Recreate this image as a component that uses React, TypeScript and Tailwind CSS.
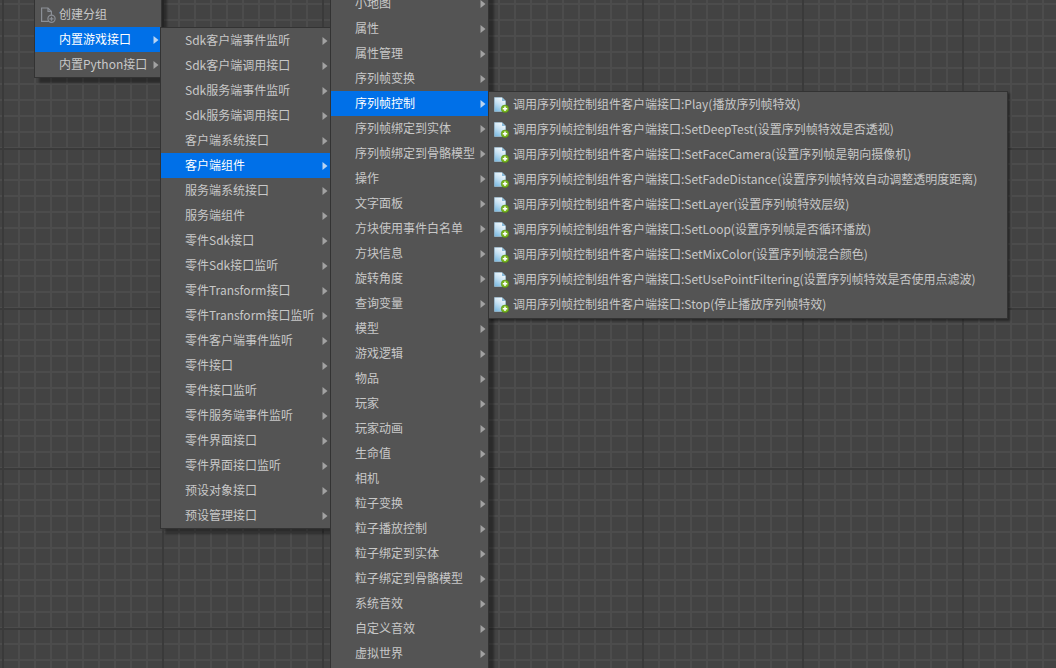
const groupMenu = ['Sdk客户端事件监听', 'Sdk客户端调用接口', 'Sdk服务端事件监听', 'Sdk服务端调用接口', '客户端系统接口', '客户端组件', '服务端系统接口', '服务端组件', '零件Sdk接口', '零件Sdk接口监听', '零件Transform接口', '零件Transform接口监听', '零件客户端事件监听', '零件接口', '零件接口监听', '零件服务端事件监听', '零件界面接口', '零件界面接口监听', '预设对象接口', '预设管理接口']

const componentMenu = ['小地图', '属性', '属性管理', '序列帧变换', '序列帧控制', '序列帧绑定到实体', '序列帧绑定到骨骼模型', '操作', '文字面板', '方块使用事件白名单', '方块信息', '旋转角度', '查询变量', '模型', '游戏逻辑', '物品', '玩家', '玩家动画', '生命值', '相机', '粒子变换', '粒子播放控制', '粒子绑定到实体', '粒子绑定到骨骼模型', '系统音效', '自定义音效', '虚拟世界']

const apiMenu = [
  '调用序列帧控制组件客户端接口:Play(播放序列帧特效)',
  '调用序列帧控制组件客户端接口:SetDeepTest(设置序列帧特效是否透视)',
  '调用序列帧控制组件客户端接口:SetFaceCamera(设置序列帧是朝向摄像机)',
  '调用序列帧控制组件客户端接口:SetFadeDistance(设置序列帧特效自动调整透明度距离)',
  '调用序列帧控制组件客户端接口:SetLayer(设置序列帧特效层级)',
  '调用序列帧控制组件客户端接口:SetLoop(设置序列帧是否循环播放)',
  '调用序列帧控制组件客户端接口:SetMixColor(设置序列帧混合颜色)',
  '调用序列帧控制组件客户端接口:SetUsePointFiltering(设置序列帧特效是否使用点滤波)',
  '调用序列帧控制组件客户端接口:Stop(停止播放序列帧特效)',
]

function Arrow({ active }: { active?: boolean }) {
  return (
    <svg width="6" height="8" viewBox="0 0 6 8" className="shrink-0">
      <path d="M0.5 0 L5.5 4 L0.5 8 Z" fill={active ? '#b9d4f2' : '#a2a2a2'} />
    </svg>
  )
}

function Row({ label, active }: { label: string; active?: boolean }) {
  return (
    <div className={`flex h-[25px] items-center justify-between pl-6 pr-[2px] ${active ? 'bg-[#0070e8] text-white' : 'text-[#c8c8c8]'}`}>
      <span className="whitespace-nowrap pb-[2px]">{label}</span>
      <Arrow active={active} />
    </div>
  )
}

function NewGroupIcon() {
  return (
    <svg width="16" height="16" viewBox="0 0 16 16" fill="none" className="shrink-0" stroke="#8b8f96" strokeWidth="1.2">
      <path d="M1.6 1 H8 L11.4 4.4 V14.4 H1.6 Z" />
      <path d="M8 1 V4.4 H11.4" />
      <circle cx="11.5" cy="11.8" r="3.6" fill="#545454" />
      <path d="M11.5 9.8 V13.8 M9.5 11.8 H13.5" />
    </svg>
  )
}

function ApiIcon({ id }: { id: number }) {
  return (
    <svg width="15" height="16" viewBox="0 0 15 16" className="shrink-0">
      <defs>
        <linearGradient id={`page-${id}`} x1="0.7" y1="0" x2="0.2" y2="1">
          <stop offset="0" stopColor="#f6f9fb" />
          <stop offset="0.5" stopColor="#c4e0f2" />
          <stop offset="1" stopColor="#7dbbe2" />
        </linearGradient>
      </defs>
      <path d="M0.5 0.5 H8 L11.5 4 V14.5 H0.5 Z" fill={`url(#page-${id})`} stroke="#a6cbe2" strokeWidth="0.6" />
      <path d="M8 0.5 V4 H11.5 Z" fill="#86b9d9" />
      <circle cx="11" cy="11.8" r="3.8" fill="#7ab820" stroke="#4d8410" strokeWidth="0.5" />
      <path d="M11 9.6 V14 M8.8 11.8 H13.2" stroke="#fff" strokeWidth="1.5" />
    </svg>
  )
}

export default function App() {
  return (
    <div className="relative h-[668px] w-[1056px] overflow-hidden bg-[#434343] bg-[linear-gradient(#3a3a3a_2px,transparent_2px),linear-gradient(90deg,#3a3a3a_2px,transparent_2px),linear-gradient(#4c4c4c_2px,transparent_2px),linear-gradient(90deg,#4c4c4c_2px,transparent_2px)] bg-[size:160px_160px,160px_160px,16px_16px,16px_16px] bg-[position:0_148px,2px_0,0_3px,2px_0] font-['Noto_Sans_CJK_SC','Noto_Sans',sans-serif] text-[12px]">
      <div className="absolute left-[34px] top-[-24px] w-[128px] border border-[#333] bg-[#545454] shadow-[5px_5px_2px_rgba(0,0,0,0.35)]">
        <div className="h-[25px]" />
        <div className="flex h-[25px] items-center gap-[3px] pl-[5px] text-[#c8c8c8]">
          <NewGroupIcon />
          <span className="pb-[2px]">创建分组</span>
        </div>
        <Row label="内置游戏接口" active />
        <Row label="内置Python接口" />
      </div>

      <div className="absolute left-[160px] top-[27px] w-[171px] border border-[#333] bg-[#545454] shadow-[5px_5px_2px_rgba(0,0,0,0.35)]">
        {groupMenu.map((label) => (
          <Row key={label} label={label} active={label === '客户端组件'} />
        ))}
      </div>

      <div className="absolute left-[330px] top-[-10px] w-[159px] border border-[#333] bg-[#545454] pb-4 shadow-[5px_5px_2px_rgba(0,0,0,0.35)]">
        {componentMenu.map((label) => (
          <Row key={label} label={label} active={label === '序列帧控制'} />
        ))}
      </div>

      <div className="absolute left-[488px] top-[91px] w-[520px] border border-[#333] bg-[#545454] pb-[1px] shadow-[2px_2px_2px_rgba(0,0,0,0.4)]">
        {apiMenu.map((label, i) => (
          <div key={label} className="flex h-[25px] items-center gap-[4px] pl-[5px] text-[#c8c8c8]">
            <ApiIcon id={i} />
            <span className="whitespace-nowrap pb-[2px]">{label}</span>
          </div>
        ))}
      </div>
    </div>
  )
}
